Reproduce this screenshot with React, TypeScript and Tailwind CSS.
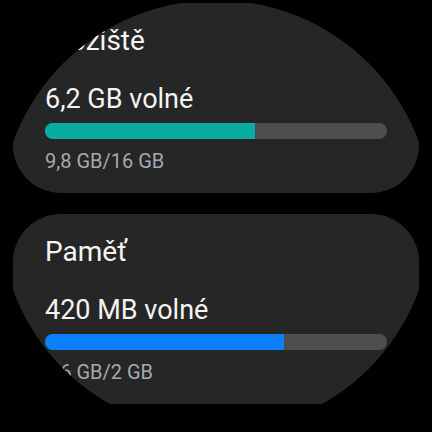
const items = [
  { title: "Úložiště", free: "6,2 GB volné", used: "9,8 GB/16 GB", pct: 61.5, color: "bg-[#0aaba0]" },
  { title: "Paměť", free: "420 MB volné", used: "1,6 GB/2 GB", pct: 70, color: "bg-[#0a80fc]" },
];

function UsageCard({ title, free, used, pct, color }: (typeof items)[number]) {
  return (
    <div className="h-[190px] shrink-0 rounded-[48px] bg-[#262626] px-[32px] pt-[22px]">
      <div className="text-[28px] leading-[32px] text-[#f4f4f4]">{title}</div>
      <div className="mt-[26px] text-[27px] leading-[32px] text-[#f4f4f4]">{free}</div>
      <div className="mt-[8px] h-[16px] w-full overflow-hidden rounded-full bg-[#4e4e4e]">
        <div className={`h-full ${color}`} style={{ width: `${pct}%` }} />
      </div>
      <div className="mt-[10px] text-[20px] leading-[24px] text-[#a2aab2]">{used}</div>
    </div>
  );
}

export default function App() {
  return (
    <div className="h-[432px] w-[432px] bg-black" style={{ fontFamily: "Roboto, 'Noto Sans', sans-serif" }}>
      <div className="h-full w-full overflow-hidden rounded-full bg-black">
        <div className="flex flex-col gap-[21px] px-[13px] pt-[3px]">
          {items.map((it) => (
            <UsageCard key={it.title} {...it} />
          ))}
        </div>
      </div>
    </div>
  );
}
